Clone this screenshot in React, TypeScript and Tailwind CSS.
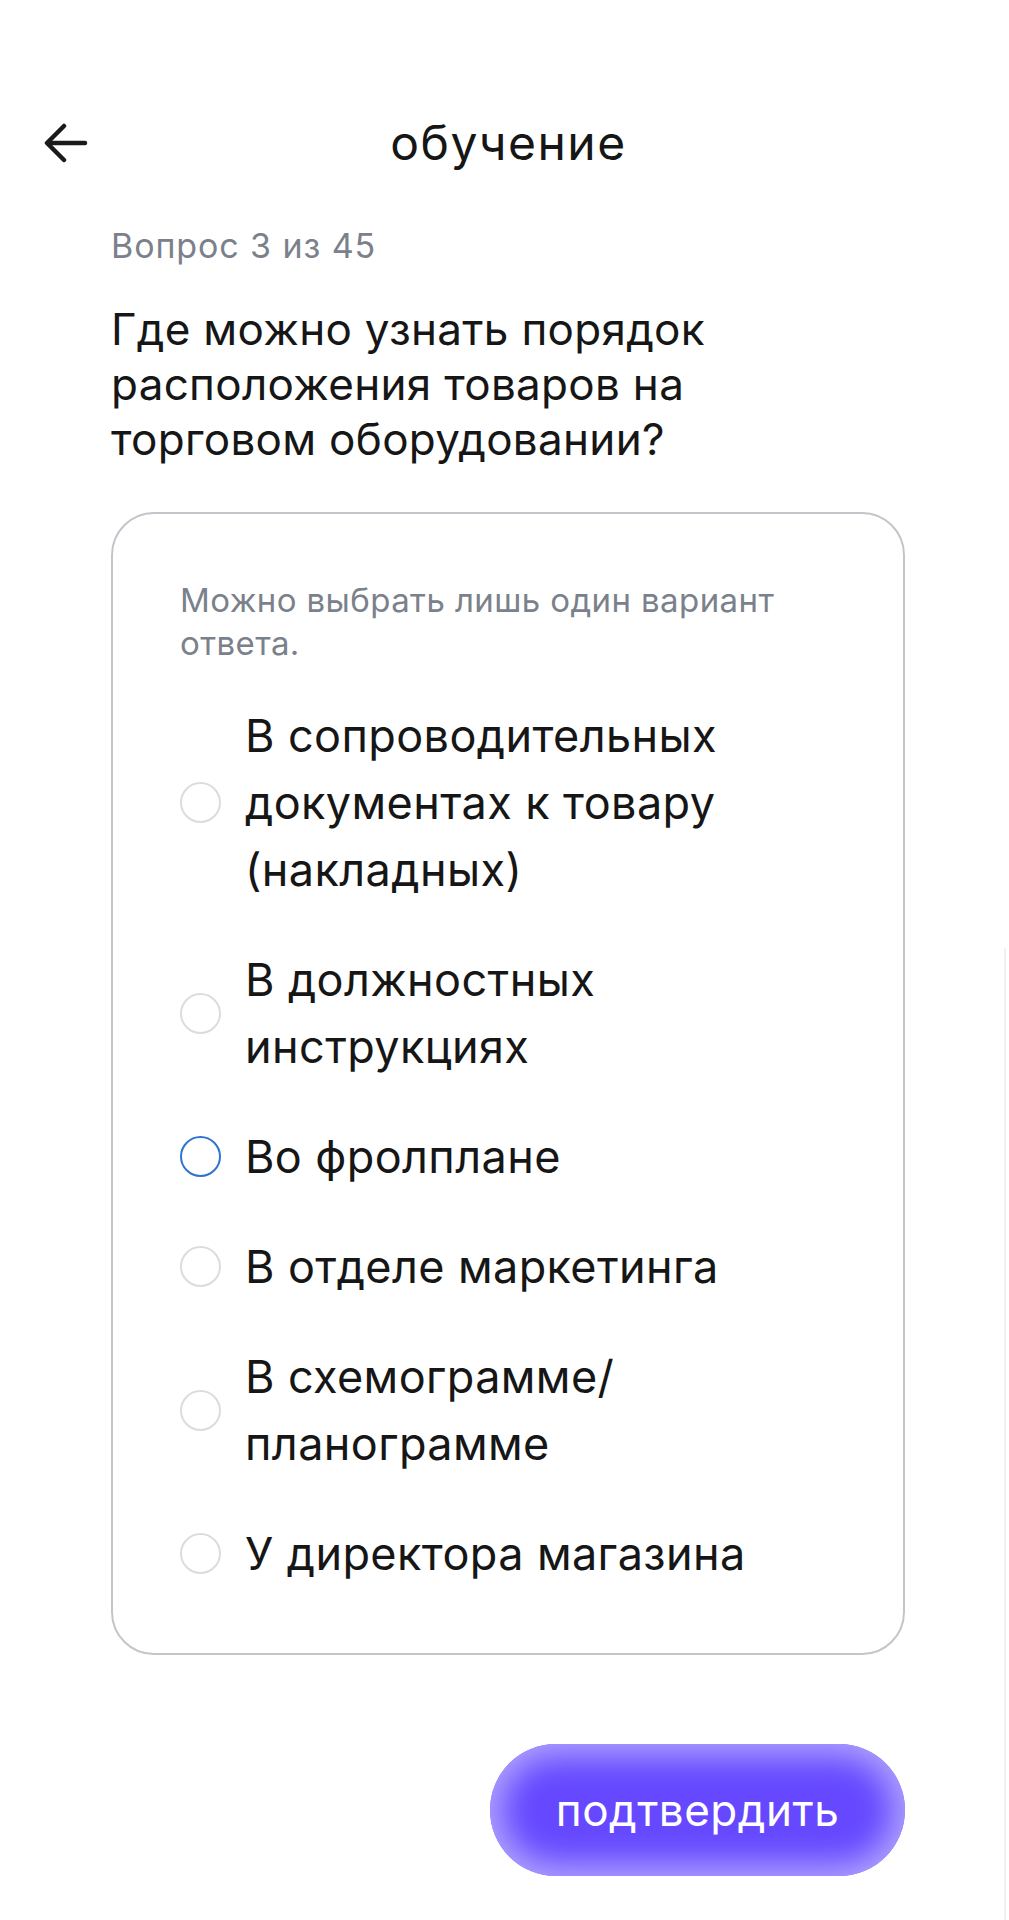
import React from "react";

const options = [
  { text: "В сопроводительных документах к товару (накладных)", selected: false },
  { text: "В должностных инструкциях", selected: false },
  { text: "Во фролплане", selected: true },
  { text: "В отделе маркетинга", selected: false },
  { text: "В схемограмме/ планограмме", selected: false },
  { text: "У директора магазина", selected: false },
];

export default function App() {
  return (
    <div className="relative w-[1009px] h-[1920px] overflow-hidden bg-white pt-[103px] font-['Inter','Roboto',sans-serif] text-[#161616]">
      <div className="absolute right-[3px] top-[948px] h-[972px] w-[2px] bg-[#f0f0f0]" />
      <header className="h-[80px] grid grid-cols-[1fr_auto_1fr] items-center">
        <div className="pl-[44px] flex items-center">
          <svg width="44" height="40" viewBox="0 0 44 40" fill="none" stroke="#1a1a1a" strokeWidth="4.5" strokeLinecap="round" strokeLinejoin="round">
            <path d="M41 20H4" />
            <path d="M20 3L3 20L20 37" />
          </svg>
        </div>
        <h1 className="text-[48px] leading-none font-normal tracking-[1.5px] translate-x-[4px]">обучение</h1>
        <div />
      </header>
      <main className="pl-[111px] pr-[104px]">
        <p className="mt-[43px] text-[34px] leading-[40px] tracking-[0.9px] text-[#7b818b]">Вопрос 3 из 45</p>
        <h2 className="mt-[36px] text-[44px] leading-[55px] font-normal tracking-[0.3px] w-[660px]">
          Где можно узнать порядок расположения товаров на торговом оборудовании?
        </h2>
        <section className="mt-[45px] rounded-[43px] border-2 border-[#c2c5ca] pl-[67px] pr-[30px] pt-[65px] pb-[66px]">
          <p className="text-[33px] leading-[43px] tracking-[0.4px] text-[#7b818b] w-[660px]">
            Можно выбрать лишь один вариант ответа.
          </p>
          <div className="mt-[37px] flex flex-col gap-[43px]">
            {options.map((o) => (
              <div key={o.text} className="flex items-center gap-[24px]">
                <span
                  className={
                    o.selected
                      ? "shrink-0 w-[41px] h-[41px] rounded-full border-[2.5px] border-[#2f74d0]"
                      : "shrink-0 w-[41px] h-[41px] rounded-full border-2 border-[#dcdcdc]"
                  }
                />
                <span className="text-[45px] leading-[67px] tracking-[0.4px] w-[520px]">{o.text}</span>
              </div>
            ))}
          </div>
        </section>
        <div className="mt-[89px] flex justify-end">
          <button className="w-[415px] h-[132px] rounded-full bg-[#6548ff] shadow-[inset_0_0_32px_12px_#b0a4ff] text-white text-[44px] leading-none font-normal tracking-[0.5px]">
            подтвердить
          </button>
        </div>
      </main>
    </div>
  );
}
